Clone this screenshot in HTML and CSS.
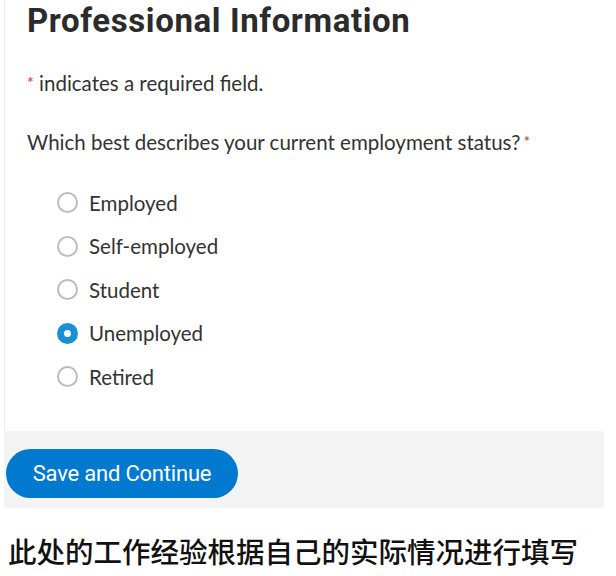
FILE: index.html
```html
<!DOCTYPE html>
<html lang="en">
<head>
  <meta charset="UTF-8">
  <title>Professional Information</title>
  <link rel="stylesheet" href="styles.css">
</head>
<body>
<div class="card">
  <div class="card-body">
    <h2 class="title">Professional Information</h2>
    <p class="note"><span class="req">*</span> indicates a required field.</p>
    <p class="question">Which best describes your current employment status?<span class="req">*</span></p>
    <ul class="choices">
      <li><span class="radio"></span>Employed</li>
      <li><span class="radio"></span>Self-employed</li>
      <li><span class="radio"></span>Student</li>
      <li><span class="radio checked"></span>Unemployed</li>
      <li><span class="radio"></span>Retired</li>
    </ul>
  </div>
  <div class="card-footer">
    <button class="btn-save">Save and Continue</button>
  </div>
</div>
<p class="caption">此处的工作经验根据自己的实际情况进行填写</p>
</body>
</html>
```

FILE: styles.css
```css
html {
  background: #fff;
}
body {
  margin: 0;
  font-family: Lato, "Open Sans", sans-serif;
  color: #333;
}
.card {
  width: 600px;
  margin-left: 4px;
}
.card-body {
  border-left: 1px solid #ececec;
  padding: 0 0 0 22px;
  height: 431px;
  box-sizing: border-box;
}
.title {
  margin: 0;
  padding-top: 2px;
  font-family: Roboto, sans-serif;
  font-weight: 700;
  font-size: 33px;
  line-height: 38px;
  color: #2b2b2b;
  letter-spacing: 0.6px;
}
.note {
  margin: 29px 0 0;
  font-size: 20.5px;
  line-height: 26px;
}
.question {
  margin: 32px 0 0;
  font-size: 20.5px;
  line-height: 26px;
}
.req {
  color: #c0302f;
  font-size: 16px;
  vertical-align: 3px;
  margin-left: 3px;
}
.note .req {
  margin-left: 0;
}
.choices {
  list-style: none;
  margin: 26px 0 0;
  padding: 0 0 0 30px;
}
.choices li {
  display: flex;
  align-items: center;
  height: 43.5px;
  font-size: 20.5px;
}
.radio {
  width: 17px;
  height: 17px;
  border: 2px solid #bdbdbd;
  border-radius: 50%;
  margin-right: 11px;
  box-sizing: content-box;
}
.radio.checked {
  width: 7px;
  height: 7px;
  border: 7px solid #1a8fd6;
  background: #fff;
}
.card-footer {
  background: #f4f4f4;
  height: 77px;
  padding-top: 18px;
  box-sizing: border-box;
}
.btn-save {
  display: block;
  margin-left: 2px;
  width: 232px;
  height: 49px;
  border: none;
  border-radius: 25px;
  background: #0079cf;
  color: #fff;
  font-family: Roboto, sans-serif;
  font-size: 22px;
  letter-spacing: -0.2px;
}
.caption {
  margin: 23px 0 0 8px;
  font-family: "Noto Sans CJK SC", sans-serif;
  font-weight: 500;
  font-size: 28.5px;
  line-height: 40px;
  color: #111;
}
```
